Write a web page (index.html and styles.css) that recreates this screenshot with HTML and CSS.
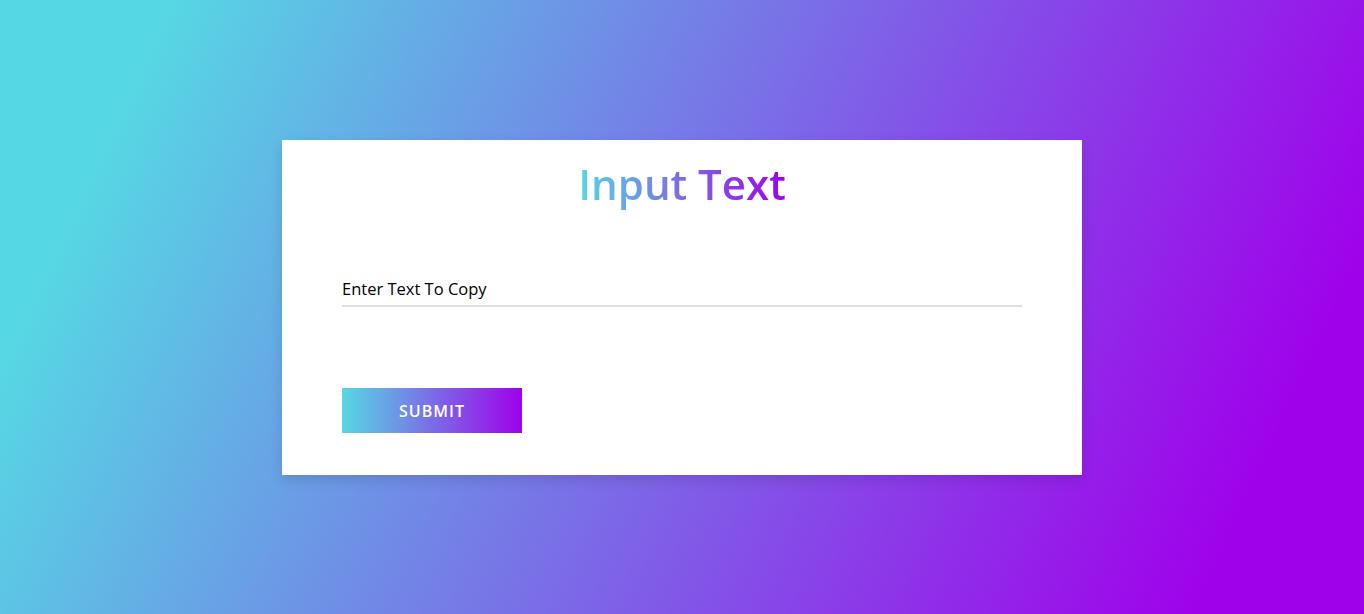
FILE: index.html
```html
<!DOCTYPE html>
<html lang="en">
<head>
<meta charset="utf-8">
<title>Input Text</title>
<link rel="stylesheet" href="styles.css">
</head>
<body>
  <div class="card">
    <div class="title-row"><h1 class="title">Input Text</h1></div>
    <div class="field">
      <input class="field-input" type="text" placeholder="Enter Text To Copy">
    </div>
    <div class="actions">
      <button class="btn" type="button">Submit</button>
    </div>
  </div>
</body>
</html>
```
FILE: styles.css
```css
* { box-sizing: border-box; }
html, body { margin: 0; padding: 0; }
body {
  min-height: 100vh;
  display: flex;
  align-items: center;
  justify-content: center;
  background: linear-gradient(115deg, #56d8e4 10%, #9f01ea 90%);
  font-family: "Open Sans", "DejaVu Sans", sans-serif;
}
.card {
  width: 800px;
  background: #fff;
  padding: 18px 60px 42px;
  box-shadow: 0 5px 12px rgba(0, 0, 0, 0.12);
}
.title-row {
  display: flex;
  justify-content: center;
}
.title {
  margin: 0;
  font-size: 42px;
  font-weight: 600;
  line-height: 52px;
  background: linear-gradient(90deg, #56d8e4, #9f01ea);
  -webkit-background-clip: text;
  background-clip: text;
  color: transparent;
}
.field {
  margin-top: 55px;
}
.field-input {
  display: block;
  width: 100%;
  height: 42px;
  border: none;
  border-bottom: 2px solid rgba(0, 0, 0, 0.12);
  outline: none;
  padding: 8px 0 0;
  font-family: inherit;
  font-size: 16.5px;
  color: #000;
  background: transparent;
}
.field-input::placeholder { color: #000; opacity: 1; }
.actions {
  margin-top: 81px;
}
.btn {
  display: block;
  width: 180px;
  height: 45px;
  border: none;
  padding: 1px 0 0;
  background: linear-gradient(90deg, #56d8e4, #9f01ea);
  color: #fff;
  font-family: inherit;
  font-size: 16px;
  font-weight: 600;
  letter-spacing: 1px;
  text-transform: uppercase;
}
```
